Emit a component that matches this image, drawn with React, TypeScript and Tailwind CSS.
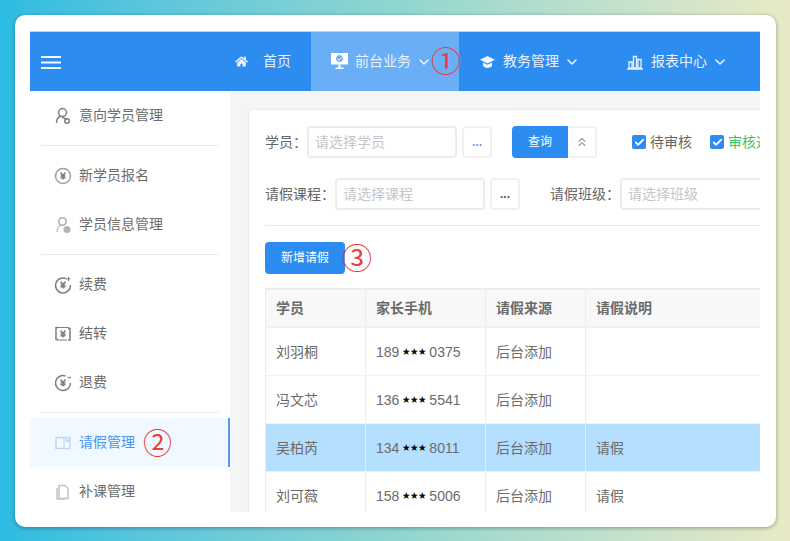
import { ChevronDown, ChevronsUp, Check } from "lucide-react";
import { FaHome } from "react-icons/fa";

const font = "font-['Liberation_Sans','Noto_Sans_CJK_SC',sans-serif]";

function Yuan({ x = 10, y = 10 }: { x?: number; y?: number }) {
  return (
    <path
      d={`M${x - 2.5} ${y - 3.5}L${x} ${y - 0.5}L${x + 2.5} ${y - 3.5}M${x} ${y - 0.5}V${y + 3.5}M${x - 2.5} ${y}H${x + 2.5}M${x - 2.5} ${y + 1.8}H${x + 2.5}`}
    />
  );
}

function SideIcon({ kind, active }: { kind: string; active?: boolean }) {
  const stroke = active ? "#bcd6f5" : "#7f7f7f";
  return (
    <svg width="20" height="20" viewBox="0 0 20 20" fill="none" stroke={stroke} strokeWidth="1.5" className="shrink-0">
      {kind === "user" && (
        <>
          <circle cx="9.500" cy="6.500" r="4" />
          <path d="M3.500 17c0-3.500 1.500-6 4.500-7" />
          <path d="M9 11.500c2 0 3.500 1 4.500 2.500" />
          <circle cx="14" cy="15" r="2.300" />
        </>
      )}
      {kind === "yuan" && (
        <>
          <circle cx="10" cy="10" r="7.500" stroke="#a0a0a0" />
          <Yuan />
        </>
      )}
      {kind === "info" && (
        <>
          <circle cx="9.500" cy="6.500" r="3.700" stroke="#aaaaaa" />
          <path d="M4 17c0-3.500 1.200-5.500 3.500-6.500" stroke="#c8c8c8" />
          <circle cx="14" cy="14.500" r="2.800" fill="#b4b4b4" stroke="#b4b4b4" />
        </>
      )}
      {kind === "renew" && (
        <>
          <path d="M13.500 3.800A7.500 7.500 0 1 0 17.500 10" />
          <path d="M15.500 2v4M13.500 4h4" strokeWidth="1.100" />
          <Yuan />
        </>
      )}
      {kind === "transfer" && (
        <>
          <path d="M5 3.500H3v12h2M15 4.500h2v11.500h-2" />
          <path d="M5 3.500h11M4 16h10" strokeWidth="1" />
          <Yuan />
        </>
      )}
      {kind === "refund" && (
        <>
          <path d="M12.500 3A7.500 7.500 0 1 0 17.500 10" />
          <path d="M14.500 4.500h3.500" strokeWidth="1.200" />
          <Yuan />
        </>
      )}
      {kind === "leave" && (
        <>
          <path d="M3 4.500h14v11H3z" />
          <path d="M11 4.500v11M13 4.500v4l1.500-1 1.500 1v-4" strokeWidth="1.100" />
        </>
      )}
      {kind === "makeup" && (
        <path d="M6 3.500h6l3 3v10H6zM4 6v11h8" stroke="#c4c4c4" />
      )}
    </svg>
  );
}

function SideItem({ kind, label, active, badge }: { kind: string; label: string; active?: boolean; badge?: string }) {
  return (
    <div
      className={`h-[49px] shrink-0 flex items-center gap-[6px] pl-[23px] text-sm ${
        active ? "bg-[#f0f9ff] text-[#4a94ee] border-r-2 border-[#5b9be6]" : "text-[#6c6c6c]"
      }`}
    >
      <SideIcon kind={kind} active={active} />
      <span className="pb-[2px]">{label}</span>
      {badge && <span className="ml-[2px] pb-[2px] text-[29px] leading-none text-[#ee3b3b] font-['Noto_Sans_CJK_SC',sans-serif]">{badge}</span>}
    </div>
  );
}

function Divider() {
  return <div className="h-px shrink-0 my-[5px] mx-[11px] bg-[#ececec]" />;
}

function NavItem({ icon, label, caret, className }: { icon: React.ReactNode; label: string; caret?: boolean; className?: string }) {
  return (
    <div className={`h-full flex items-center text-sm text-[#e8f2fe] ${className ?? ""}`}>
      {icon}
      <span className="pb-[2px]">{label}</span>
      {caret && <ChevronDown size={16} strokeWidth={2.4} className="ml-[5px]" />}
    </div>
  );
}

function Field({ label, placeholder, inputW }: { label: string; placeholder: string; inputW: string }) {
  return (
    <div className="flex items-center">
      <span className="text-sm text-[#666] whitespace-nowrap">{label}</span>
      <div className={`h-[32px] ${inputW} shrink-0 border-2 border-[#ececef] rounded-[4px] flex items-center pl-[6px] text-sm text-[#c4c6ca] whitespace-nowrap`}>
        {placeholder}
      </div>
    </div>
  );
}

function DotsButton({ color }: { color: string }) {
  return (
    <div className={`ml-[5px] h-[32px] w-[30px] shrink-0 border-2 border-[#f0f0f2] rounded-[4px] flex items-center justify-center text-xs font-bold ${color}`}>
      ...
    </div>
  );
}

function CheckItem({ label, color }: { label: string; color: string }) {
  return (
    <div className={`flex items-center gap-1 text-sm whitespace-nowrap ${color}`}>
      <span className="w-[14px] h-[14px] rounded-[2px] bg-[#2d8cf0] flex items-center justify-center">
        <Check size={11} strokeWidth={4} className="text-white" />
      </span>
      {label}
    </div>
  );
}

function Phone({ head, tail }: { head: string; tail: string }) {
  return (
    <span className="flex items-center">
      {head}
      <span className="mx-[3px] text-[8px] text-black">★★★</span>
      {tail}
    </span>
  );
}

const rows = [
  { name: "刘羽桐", head: "189", tail: "0375", note: "" },
  { name: "冯文芯", head: "136", tail: "5541", note: "" },
  { name: "吴柏芮", head: "134", tail: "8011", note: "请假", hl: true },
  { name: "刘可薇", head: "158", tail: "5006", note: "请假" },
];

export default function App() {
  return (
    <div className={`w-[790px] h-[541px] overflow-hidden p-[15px] pr-[14px] pb-[14px] bg-gradient-to-r from-[#2bbce3] via-[#8ed6d0] to-[#e9eac5] ${font}`}>
      <div className="h-full bg-white rounded-[10px] shadow-[0_1px_4px_rgba(0,0,0,0.35)] pt-4 pb-[15px] pl-[15px] pr-4">
        <div className="h-full flex flex-col overflow-hidden">
          <header className="relative h-[60px] shrink-0 bg-[#2d8cf0] border-t border-[#c9d3dc] flex items-center">
            <svg width="20" height="15" viewBox="0 0 20 15" className="ml-[11px] mt-[2px] shrink-0" stroke="#f2f8ff" strokeWidth="2">
              <path d="M0 2h20M0 7.500h20M0 13h20" />
            </svg>
            <NavItem
              className="ml-[174px] w-[76px] shrink-0"
              icon={<FaHome size={13} className="mr-[15px]" />}
              label="首页"
            />
            <div className="h-full w-[148px] shrink-0 bg-[#6aaef6] flex items-center pl-[20px]">
              <NavItem
                icon={
                  <svg width="17" height="17" viewBox="0 0 17 17" className="mr-[7px]">
                    <path fill="#fff" fillRule="evenodd" d="M0 0h17v11.500H0zM8.500 2a3.500 3.500 0 1 0 0.010 0zM6.800 5.200l1.400 1.500 2.200-2.400.6.5-2.800 3-2-2z" />
                    <path fill="#fff" d="M7.500 11.500h2v3h3V16h-8v-1.500h3z" />
                  </svg>
                }
                label="前台业务"
                caret
              />
            </div>
            <NavItem
              className="ml-[21px] w-[147px] shrink-0"
              icon={
                <svg width="15" height="12" viewBox="0 0 15 12" className="mr-2">
                  <path fill="#f2f8ff" d="M7.500 0L15 3.800 7.500 7.500 0 3.800z" />
                  <path fill="#f2f8ff" d="M3 6.500l4.500 2.200L12 6.500V10c-1.200 1.300-2.700 2-4.500 2S4.200 11.300 3 10z" />
                </svg>
              }
              label="教务管理"
              caret
            />
            <NavItem
              icon={
                <svg width="16" height="16" viewBox="0 0 16 16" fill="none" stroke="#e8f2fe" strokeWidth="1.300" className="mr-2">
                  <path d="M2 8h3v6H2zM6.500 2.500h3V14h-3zM11 5.500h3V14h-3zM0 15h16" />
                </svg>
              }
              label="报表中心"
              caret
            />
            <span className="absolute left-[401px] top-[9px] text-[30px] leading-[36px] text-[#ee3b3b] font-['Noto_Sans_CJK_SC',sans-serif]">①</span>
          </header>

          <div className="flex flex-1 min-h-0">
            <aside className="w-[200px] shrink-0 flex flex-col overflow-hidden bg-white">
              <SideItem kind="user" label="意向学员管理" />
              <Divider />
              <SideItem kind="yuan" label="新学员报名" />
              <SideItem kind="info" label="学员信息管理" />
              <Divider />
              <SideItem kind="renew" label="续费" />
              <SideItem kind="transfer" label="结转" />
              <SideItem kind="refund" label="退费" />
              <Divider />
              <SideItem kind="leave" label="请假管理" active badge="②" />
              <SideItem kind="makeup" label="补课管理" />
            </aside>

            <main className="flex-1 min-w-0 bg-[#f4f5f7] overflow-hidden pt-[19px] pl-[19px]">
              <div className="w-[600px] bg-white rounded-[3px] shadow-[0_0_2px_rgba(0,0,0,0.15)] pt-4 pl-4">
                <div className="flex items-center">
                  <Field label="学员：" placeholder="请选择学员" inputW="w-[150px]" />
                  <DotsButton color="text-[#5b9bf0]" />
                  <div className="ml-5 flex h-[32px] shrink-0">
                    <div className="w-[56px] bg-[#2d8cf0] rounded-l-[4px] flex items-center justify-center text-xs text-white">查询</div>
                    <div className="w-[29px] border-2 border-l-0 border-[#f0f0f2] rounded-r-[4px] flex items-center justify-center text-[#9a9a9a]">
                      <ChevronsUp size={14} />
                    </div>
                  </div>
                  <div className="ml-[35px] flex items-center gap-[18px]">
                    <CheckItem label="待审核" color="text-[#666]" />
                    <CheckItem label="审核通过" color="text-[#36c46b]" />
                  </div>
                </div>
                <div className="mt-5 flex items-center">
                  <Field label="请假课程：" placeholder="请选择课程" inputW="w-[150px]" />
                  <DotsButton color="text-[#555]" />
                  <div className="ml-[30px]">
                    <Field label="请假班级：" placeholder="请选择班级" inputW="w-[150px]" />
                  </div>
                </div>
                <div className="mt-[15px] h-px bg-[#ececec]" />
                <div className="mt-4 flex items-center h-[32px]">
                  <div className="w-[80px] h-[32px] rounded-[4px] bg-[#2d8cf0] flex items-center justify-center text-xs text-white">新增请假</div>
                  <span className="ml-[-3px] pb-[4px] text-[30px] leading-[32px] text-[#ee3b3b] font-['Noto_Sans_CJK_SC',sans-serif]">③</span>
                </div>

                <div className="mt-[14px] text-sm text-[#6b6b6b] border-t-2 border-l border-[#ececec]">
                  <div className="h-[38px] grid grid-cols-[100px_120px_100px_1fr] bg-[#f8f8f9] font-bold border-b-2 border-[#f0f0f2]">
                    {["学员", "家长手机", "请假来源", "请假说明"].map((h) => (
                      <div key={h} className="flex items-center pl-[10px] border-r border-[#ececec]">{h}</div>
                    ))}
                  </div>
                  {rows.map((r) => (
                    <div
                      key={r.name}
                      className={`h-[48px] grid grid-cols-[100px_120px_100px_1fr] border-b border-[#f0f0f2] ${r.hl ? "bg-[#b5dffe]" : ""}`}
                    >
                      <div className="flex items-center pl-[10px] border-r border-[#ececec]">{r.name}</div>
                      <div className="flex items-center pl-[10px] border-r border-[#ececec]">
                        <Phone head={r.head} tail={r.tail} />
                      </div>
                      <div className="flex items-center pl-[10px] border-r border-[#ececec]">后台添加</div>
                      <div className="flex items-center pl-[10px]">{r.note}</div>
                    </div>
                  ))}
                </div>
              </div>
            </main>
          </div>
        </div>
      </div>
    </div>
  );
}
